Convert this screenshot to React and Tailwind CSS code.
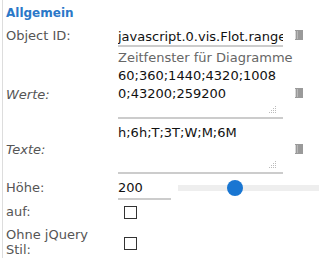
import React from 'react';

const Grip = () => (
  <svg width="8" height="8" viewBox="0 0 8 8" className="absolute right-[6px] bottom-[3px]">
    <rect x="6" y="0" width="1" height="1" fill="#bbb" />
    <rect x="4" y="2" width="1" height="1" fill="#bbb" />
    <rect x="6" y="2" width="1" height="1" fill="#bbb" />
    <rect x="2" y="4" width="1" height="1" fill="#bbb" />
    <rect x="4" y="4" width="1" height="1" fill="#bbb" />
    <rect x="6" y="4" width="1" height="1" fill="#bbb" />
    <rect x="0" y="6" width="1" height="1" fill="#bbb" />
    <rect x="2" y="6" width="1" height="1" fill="#bbb" />
    <rect x="4" y="6" width="1" height="1" fill="#bbb" />
    <rect x="6" y="6" width="1" height="1" fill="#bbb" />
  </svg>
);

const EditIcon = () => (
  <svg width="8" height="10" viewBox="0 0 8 10" className="shrink-0 block">
    <rect x="0" y="0" width="8" height="10" fill="#9a9a9a" />
    <rect x="0" y="1" width="1" height="8" fill="#d8d8d8" />
    <rect x="2" y="1" width="1" height="8" fill="#b8b8b8" />
  </svg>
);

const Label = ({ children, italic }) => (
  <div className={`w-[112px] shrink-0 text-[#555] ${italic ? 'italic' : ''}`}>{children}</div>
);

export default function App() {
  return (
    <div
      className="w-[319px] h-[258px] overflow-hidden bg-white text-[13px] leading-[16px]"
      style={{ fontFamily: 'Verdana, "DejaVu Sans", sans-serif' }}
    >
      <div className="ml-[2px] border-l border-[#ddd] h-full pl-[3px]">
        <div className="pt-[5px] h-[24px] text-[12px] font-bold text-[#2b78c8]">Allgemein</div>

        <div className="flex items-center h-[23px]">
          <Label>Object ID:</Label>
          <input
            readOnly
            value="javascript.0.vis.Flot.range"
            className="w-[165px] h-[23px] border-b-2 border-[#ccc] pt-[4px] p-0 text-[#111] outline-none bg-transparent"
            style={{ fontFamily: 'inherit', fontSize: 'inherit' }}
          />
          <div className="ml-[12px] mt-[-2px]"><EditIcon /></div>
        </div>

        <div className="flex h-[20px] items-end pb-[1px]">
          <Label />
          <div className="text-[#666] whitespace-nowrap">Zeitfenster für Diagramme</div>
        </div>

        <div className="flex items-center h-[52px]">
          <Label italic><div className="mt-[4px]">Werte:</div></Label>
          <div className="relative w-[165px] h-[52px] border-b-2 border-[#ccc] leading-[18px] text-[#111]">
            60;360;1440;4320;1008<br />0;43200;259200
            <Grip />
          </div>
          <div className="ml-[12px]"><EditIcon /></div>
        </div>

        <div className="flex items-center h-[55px]">
          <Label italic><div className="mt-[6px]">Texte:</div></Label>
          <div className="relative w-[165px] h-[50px] mt-[5px] border-b-2 border-[#ccc] leading-[18px] text-[#111]">
            h;6h;T;3T;W;M;6M
            <Grip />
          </div>
          <div className="ml-[12px] mt-[5px]"><EditIcon /></div>
        </div>

        <div className="flex items-center h-[26px]">
          <Label><div className="mt-[1px]">Höhe:</div></Label>
          <div className="w-[53px] h-[22px] mt-[4px] border-b-2 border-[#ccc] text-[#111] leading-[16px] pt-[2px]">200</div>
          <div className="relative ml-[7px] flex-1 h-[6px] mt-[1px] bg-[#eee]">
            <div className="absolute left-[49px] top-[-5px] w-[16px] h-[16px] rounded-full bg-[#1976d2]" />
          </div>
        </div>

        <div className="flex items-center h-[24px]">
          <Label>auf:</Label>
          <div className="ml-[6px] w-[13px] h-[13px] border border-[#333] bg-white" />
        </div>

        <div className="flex items-center h-[32px] pt-[3px]">
          <Label>
            <div className="leading-[15px]">Ohne jQuery<br />Stil:</div>
          </Label>
          <div className="ml-[6px] mt-[3px] w-[13px] h-[13px] border border-[#333] bg-white" />
        </div>
      </div>
    </div>
  );
}
